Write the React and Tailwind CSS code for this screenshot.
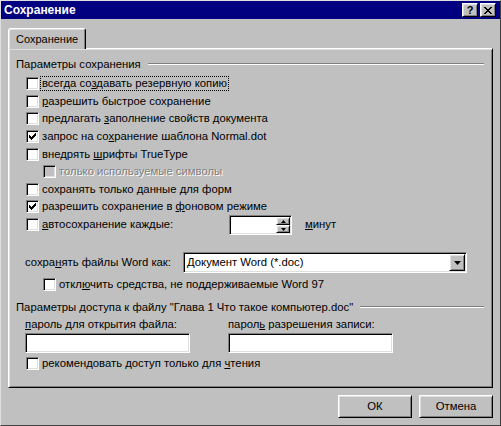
import React from 'react';

const raised =
  'border border-t-white border-l-white border-r-black border-b-black shadow-[inset_1px_1px_#dfdfdf,inset_-1px_-1px_#808080]';
const sunken =
  'border border-t-[#808080] border-l-[#808080] border-r-white border-b-white shadow-[inset_1px_1px_#000,inset_-1px_-1px_#dfdfdf]';

const saveOptions = [
  { label: 'всегда со&здавать резервную копию', h: 'h-[18px]', focus: true },
  { label: '&разрешить быстрое сохранение', h: 'h-[17px]' },
  { label: 'предлагать &заполнение свойств документа', h: 'h-[18px]' },
  { label: 'запрос на со&хранение шаблона Normal.dot', h: 'h-[18px]', checked: true },
  { label: 'внедрять &шрифты TrueType', h: 'h-[17px]' },
  { label: 'только используемые символы', h: 'h-[18px]', disabled: true, indent: true },
  { label: 'сохранять только &данные для форм', h: 'h-[17px]' },
  { label: 'разрешить сохранение в &фоновом режиме', h: 'h-[18px]', checked: true },
];

// '&' marks the access key, like a Windows resource string
const Accel = ({ text }) => {
  const i = text.indexOf('&');
  if (i < 0) return text;
  return (
    <>
      {text.slice(0, i)}
      <span className="underline underline-offset-[1px]">{text[i + 1]}</span>
      {text.slice(i + 2)}
    </>
  );
};

const Check = ({ checked, disabled }) => (
  <span
    className={`flex items-center justify-center w-[13px] h-[13px] shrink-0 ${sunken} ${
      disabled ? 'bg-[#c0c0c0]' : 'bg-white'
    }`}
  >
    {checked && (
      <svg width="7" height="7" viewBox="0 0 7 7" shapeRendering="crispEdges">
        <rect x="6" y="0" width="1" height="1" />
        <rect x="5" y="1" width="2" height="1" />
        <rect x="0" y="2" width="1" height="1" />
        <rect x="4" y="2" width="3" height="1" />
        <rect x="0" y="3" width="2" height="1" />
        <rect x="3" y="3" width="3" height="1" />
        <rect x="0" y="4" width="5" height="1" />
        <rect x="1" y="5" width="3" height="1" />
        <rect x="2" y="6" width="1" height="1" />
      </svg>
    )}
  </span>
);

const Label = ({ text, focus, disabled, className = '' }) => (
  <span
    className={`-mt-[1px] ml-[1px] px-[1px] border leading-[13px] whitespace-nowrap ${
      focus ? 'border-dotted border-black' : 'border-transparent'
    } ${disabled ? 'text-[#808080] [text-shadow:1px_1px_0_#fff]' : ''} ${className}`}
  >
    <Accel text={text} />
  </span>
);

const GroupHeader = ({ children }) => (
  <div className="flex items-center h-[14px] pl-[7px] pr-[8px]">
    <span className="leading-[14px] whitespace-nowrap">{children}</span>
    <div className="flex-1 ml-[7px] h-[2px] border-t border-t-[#808080] border-b border-b-white" />
  </div>
);

const Arrow = ({ up, w = 7 }) => (
  <svg width={w} height={(w + 1) / 2} viewBox={`0 0 ${w} ${(w + 1) / 2}`}>
    <polygon
      points={up ? `${w / 2},0 ${w},${(w + 1) / 2} 0,${(w + 1) / 2}` : `0,0 ${w},0 ${w / 2},${(w + 1) / 2}`}
      fill="#000"
    />
  </svg>
);

export default function App() {
  return (
    <div className="w-[501px] h-[426px] overflow-hidden bg-[#c0c0c0] text-black text-[11.3px] font-['Liberation_Sans',Arial,sans-serif] flex flex-col border border-t-[#dfdfdf] border-l-[#dfdfdf] border-r-[#404040] border-b-[#404040]">
      {/* title bar */}
      <div className="h-[18px] shrink-0 bg-[#000080] flex items-center pl-[3px] pr-[4px]">
        <span className="text-white font-bold text-[12px] leading-[18px]">Сохранение</span>
        <div className="ml-auto flex gap-[2px]">
          <div className={`w-[16px] h-[14px] bg-[#c0c0c0] flex items-center justify-center font-bold text-[11px] leading-none ${raised}`}>
            ?
          </div>
          <div className={`w-[16px] h-[14px] bg-[#c0c0c0] flex items-center justify-center ${raised}`}>
            <svg width="8" height="7" viewBox="0 0 8 7" shapeRendering="crispEdges">
              <path d="M0 0h2v1H0zM6 0h2v1H6zM1 1h2v1H1zM5 1h2v1H5zM2 2h4v1H2zM3 3h2v1H3zM2 4h4v1H2zM1 5h2v1H1zM5 5h2v1H5zM0 6h2v1H0zM6 6h2v1H6z" />
            </svg>
          </div>
        </div>
      </div>

      <div className="px-[7px] pt-[9px] flex flex-col">
        {/* tab strip */}
        <div className="flex">
          <div className="relative z-10 -mb-[1px] h-[21px] w-[78px] bg-[#c0c0c0] rounded-t-[3px] border-t border-l border-t-white border-l-white border-r border-r-black shadow-[inset_1px_1px_#dfdfdf,inset_-1px_0_#808080] pl-[7px] text-[11px] leading-[20px] whitespace-nowrap">
            Сохранение
          </div>
        </div>

        {/* panel */}
        <div className="h-[340px] flex flex-col pt-[8px] border border-t-white border-l-white border-r-black border-b-black shadow-[inset_1px_1px_#dfdfdf,inset_-1px_-1px_#808080]">
          <GroupHeader>Параметры сохранения</GroupHeader>

          <div className="mt-[6px] flex flex-col">
            {saveOptions.map((o) => (
              <div key={o.label} className={`flex items-start ${o.h} ${o.indent ? 'pl-[34px]' : 'pl-[17px]'}`}>
                <Check checked={o.checked} disabled={o.disabled} />
                <Label text={o.label} focus={o.focus} disabled={o.disabled} />
              </div>
            ))}

            <div className="flex items-start h-[34px] pl-[17px]">
              <Check />
              <Label text="&автосохранение каждые:" className="w-[189px]" />
              <div className={`-mt-[3px] w-[63px] h-[20px] bg-white p-[1px] flex justify-end ${sunken}`}>
                <div className="w-[14px] h-full flex flex-col">
                  <div className={`h-1/2 bg-[#c0c0c0] flex items-center justify-center ${raised}`}>
                    <Arrow up w={5} />
                  </div>
                  <div className={`h-1/2 bg-[#c0c0c0] flex items-center justify-center ${raised}`}>
                    <Arrow w={5} />
                  </div>
                </div>
              </div>
              <span className="ml-[13px] leading-[13px]">
                <Accel text="&минут" />
              </span>
            </div>
          </div>

          <div className="flex items-center h-[21px] pl-[16px]">
            <span className="w-[158px] whitespace-nowrap">
              <Accel text="сохра&нять файлы Word как:" />
            </span>
            <div className={`w-[284px] h-[21px] bg-white p-[1px] flex items-center ${sunken}`}>
              <span className="pl-[2px] flex-1">Документ Word (*.doc)</span>
              <div className={`w-[16px] h-full bg-[#c0c0c0] flex items-center justify-center ${raised}`}>
                <Arrow w={7} />
              </div>
            </div>
          </div>

          <div className="mt-[5px] flex items-start h-[13px] pl-[34px]">
            <Check />
            <Label text="откл&ючить средства, не поддерживаемые Word 97" />
          </div>

          <div className="mt-[9px]">
            <GroupHeader>Параметры доступа к файлу "Глава 1 Что такое компьютер.doc"</GroupHeader>
          </div>

          <div className="mt-[3px] flex gap-[38px] pl-[16px]">
            <div className="w-[165px] flex flex-col">
              <span className="leading-[14px]">
                <Accel text="&пароль для открытия файла:" />
              </span>
              <div className={`mt-[2px] h-[20px] bg-white ${sunken}`} />
            </div>
            <div className="w-[165px] flex flex-col">
              <span className="leading-[14px]">
                <Accel text="парол&ь разрешения записи:" />
              </span>
              <div className={`mt-[2px] h-[20px] bg-white ${sunken}`} />
            </div>
          </div>

          <div className="mt-[4px] flex items-start h-[13px] pl-[17px]">
            <Check />
            <Label text="рекомендовать доступ только для &чтения" />
          </div>
        </div>

        {/* buttons */}
        <div className="mt-[7px] flex justify-end gap-[7px]">
          <button className={`w-[74px] h-[23px] bg-[#c0c0c0] ${raised}`}>ОК</button>
          <button className={`w-[74px] h-[23px] bg-[#c0c0c0] ${raised}`}>Отмена</button>
        </div>
      </div>
    </div>
  );
}
